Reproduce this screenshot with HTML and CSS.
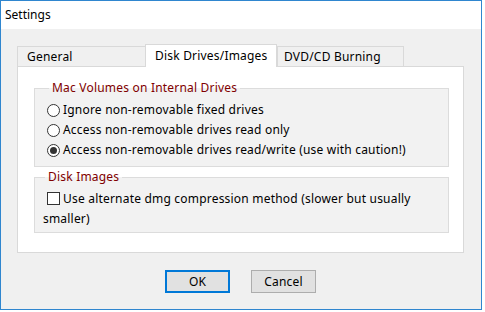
FILE: index.html
```html
<!DOCTYPE html>
<html lang="en">
<head>
    <meta charset="UTF-8">
    <title>Settings</title>
    <link rel="stylesheet" href="styles.css">
</head>
<body>
    <div class="window">
        <div class="titlebar">Settings</div>
        <div class="content">
            <div class="tabs">
                <div class="tab tab-general">General</div>
                <div class="tab tab-disk active">Disk Drives/Images</div>
                <div class="tab tab-dvd">DVD/CD Burning</div>
            </div>
            <div class="panel">
                <fieldset class="group group-volumes">
                    <legend>Mac Volumes on Internal Drives</legend>
                    <div class="option"><span class="radio"></span>Ignore non-removable fixed drives</div>
                    <div class="option"><span class="radio"></span>Access non-removable drives read only</div>
                    <div class="option"><span class="radio checked"></span>Access non-removable drives read/write (use with caution!)</div>
                </fieldset>
                <fieldset class="group group-images">
                    <legend>Disk Images</legend>
                    <div class="check-option"><span class="checkbox"></span>Use alternate dmg compression method (slower but usually smaller)</div>
                </fieldset>
            </div>
            <div class="buttons">
                <button class="btn default">OK</button>
                <button class="btn">Cancel</button>
            </div>
        </div>
    </div>
</body>
</html>
```

FILE: styles.css
```css
body {
    margin: 0;
    background: #fff;
    font-family: "Noto Sans", "Liberation Sans", sans-serif;
    font-size: 12px;
    color: #000;
}
.window {
    width: 480px;
    height: 308px;
    border: 1px solid #2f86cf;
    display: flex;
    flex-direction: column;
}
.titlebar {
    height: 28px;
    line-height: 28px;
    padding-left: 4px;
    background: #fff;
}
.content {
    flex: 1;
    background: #f0f0f0;
    padding: 15px 17px 0 16px;
    letter-spacing: 0.2px;
}
.tabs {
    display: flex;
    align-items: flex-end;
    height: 22px;
}
.tab {
    box-sizing: border-box;
    height: 20px;
    line-height: 20px;
    border: 1px solid #d9d9d9;
    border-bottom: none;
    background: #f0f0f0;
    padding-left: 9px;
}
.tab-general {
    width: 129px;
}
.tab-disk {
    width: 132px;
    margin-left: -1px;
    padding-left: 9px;
}
.tab-dvd {
    width: 127px;
    padding-left: 6px;
}
.tab.active {
    height: 23px;
    line-height: 21px;
    background: #fff;
    position: relative;
    z-index: 1;
    margin-bottom: -1px;
}
.panel {
    box-sizing: border-box;
    width: 447px;
    height: 187px;
    background: #fff;
    border: 1px solid #d9d9d9;
    padding: 13px 14px 0 16px;
}
.group {
    margin: 0;
    border: 1px solid #dcdcdc;
    background: #f2f2f2;
    padding: 0 0 0 12px;
}
.group legend {
    color: #800000;
    line-height: 16px;
    padding: 0 3px;
    margin-left: 2px;
}
.group-volumes {
    height: 87px;
    box-sizing: border-box;
    padding-top: 4px;
}
.group-images {
    margin-top: 2px;
    height: 64px;
    box-sizing: border-box;
    padding: 4px 8px 0 8px;
}
.option {
    height: 20px;
    line-height: 20px;
    display: flex;
    align-items: center;
    white-space: nowrap;
}
.radio {
    box-sizing: border-box;
    width: 13px;
    height: 13px;
    border: 1px solid #333;
    border-radius: 50%;
    background: #fff;
    margin-right: 3px;
    display: flex;
    align-items: center;
    justify-content: center;
}
.radio.checked::after {
    content: "";
    width: 7px;
    height: 7px;
    border-radius: 50%;
    background: #333;
}
.check-option {
    line-height: 20px;
    width: 396px;
}
.checkbox {
    display: inline-block;
    box-sizing: border-box;
    width: 13px;
    height: 13px;
    border: 1px solid #333;
    background: #fff;
    vertical-align: -2px;
    margin: 0 3px 0 4px;
}
.buttons {
    display: flex;
    justify-content: center;
    gap: 21px;
    padding: 17px 0 0 0;
}
.btn {
    box-sizing: border-box;
    width: 65px;
    height: 23px;
    font-family: inherit;
    font-size: 12px;
    letter-spacing: 0.2px;
    color: #000;
    background: #e1e1e1;
    border: 1px solid #adadad;
    padding: 0;
}
.btn.default {
    border: 2px solid #0078d7;
}
```
